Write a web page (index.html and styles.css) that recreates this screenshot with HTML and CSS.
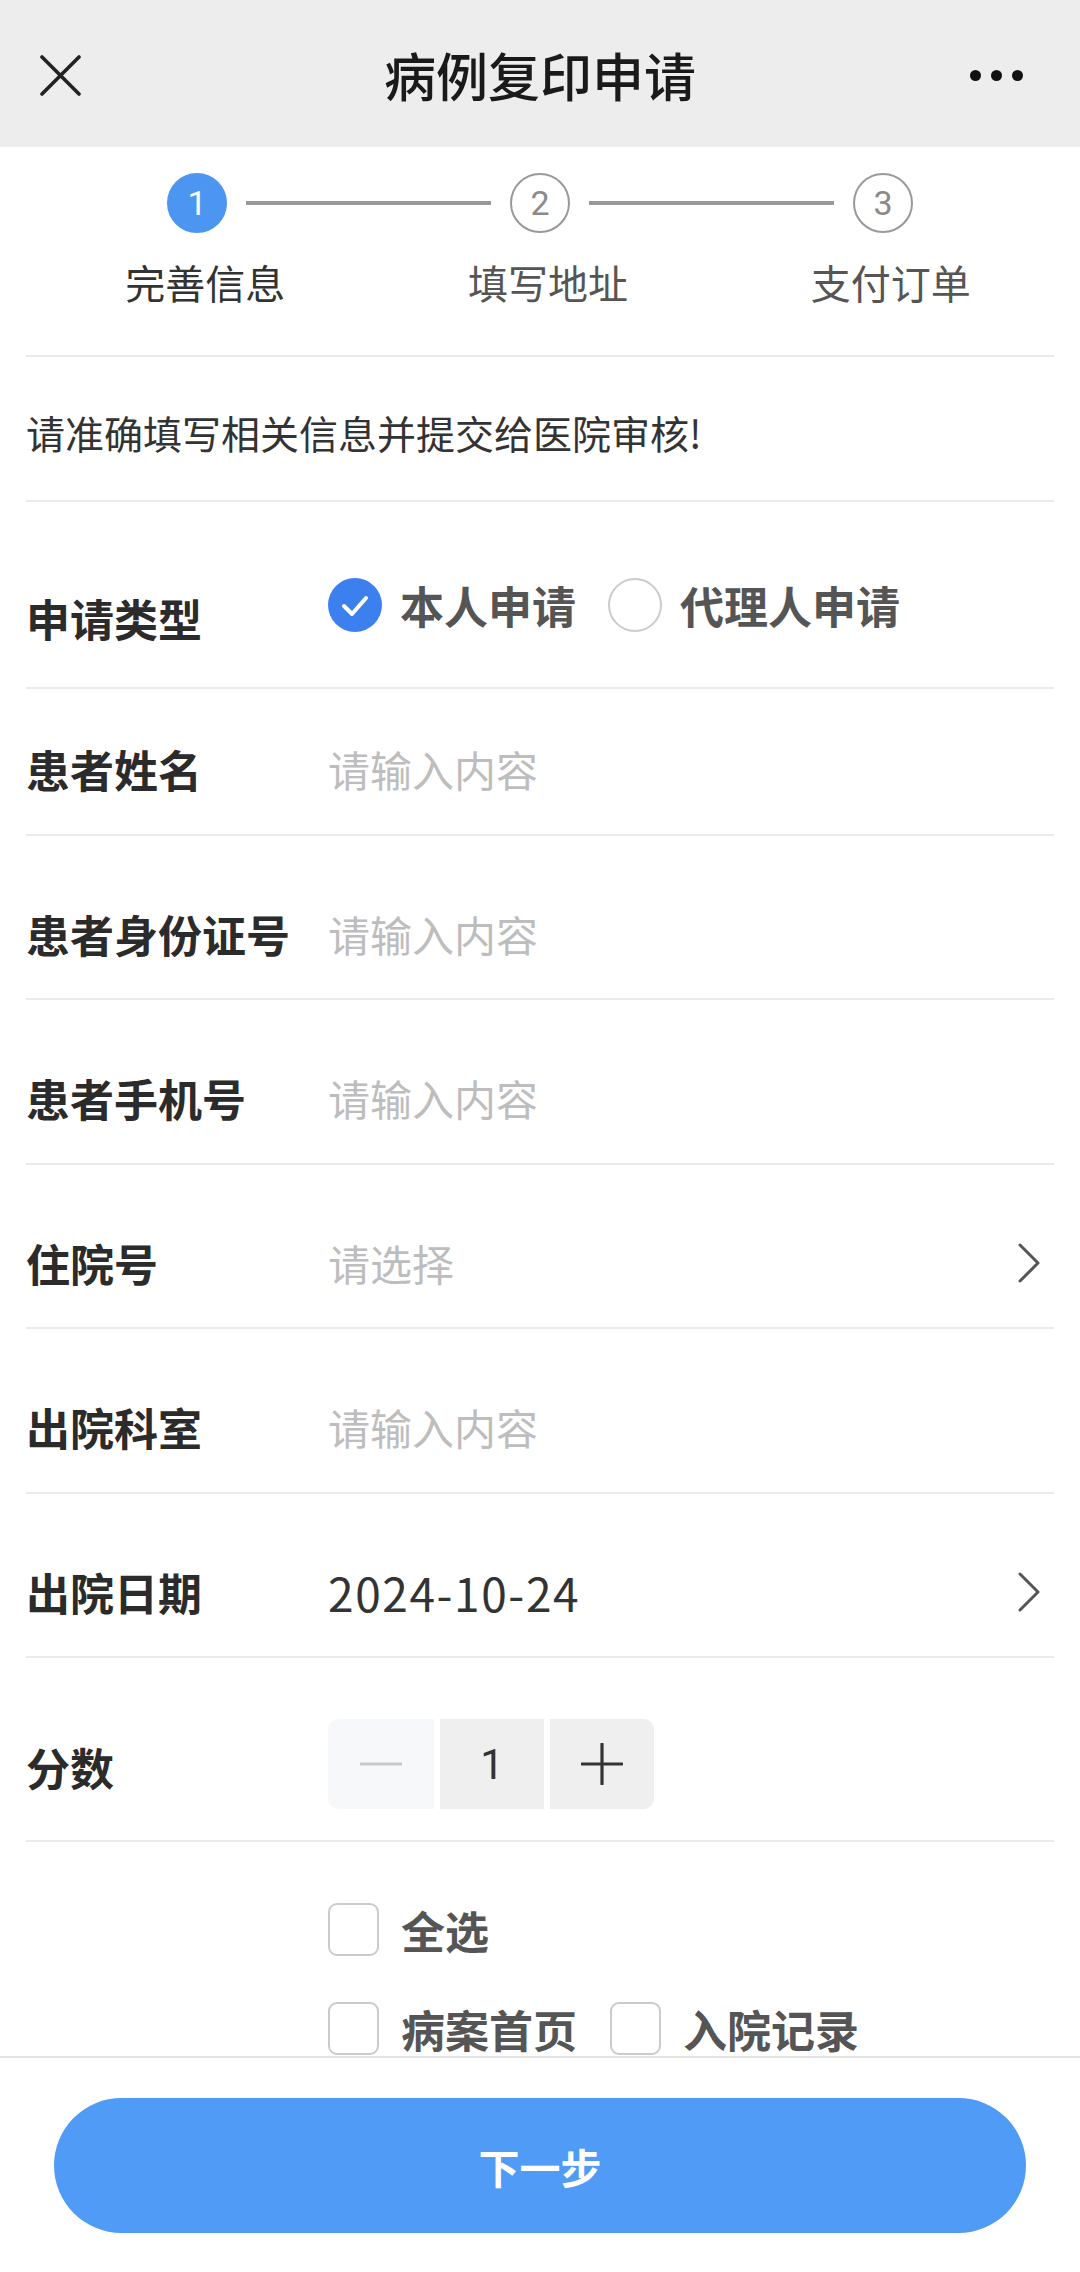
FILE: index.html
```html
<!DOCTYPE html>
<html lang="zh-CN">
  <head>
    <meta charset="UTF-8" />
    <meta name="viewport" content="width=device-width, initial-scale=1.0" />
    <title>病例复印申请</title>
    <link rel="stylesheet" href="styles.css">
  </head>
  <body>
    <div class="nav">
      <svg class="nav-close" width="41" height="41" viewBox="0 0 41 41">
        <path d="M2 2L39 39M39 2L2 39" stroke="#222" stroke-width="3.6" stroke-linecap="round" />
      </svg>
      <div class="nav-title">病例复印申请</div>
      <div class="nav-more"><i></i><i></i><i></i></div>
    </div>

    <div class="steps">
      <div class="step-track">
        <span class="step-dot active">1</span>
        <span class="step-line"></span>
        <span class="step-dot">2</span>
        <span class="step-line"></span>
        <span class="step-dot">3</span>
      </div>
      <div class="step-labels">
        <span class="active">完善信息</span>
        <span>填写地址</span>
        <span>支付订单</span>
      </div>
    </div>

    <div class="form">
      <div class="notice">请准确填写相关信息并提交给医院审核!</div>

      <div class="row row-radio">
        <div class="label">申请类型</div>
        <div class="radios">
          <span class="radio checked">
            <svg width="54" height="54" viewBox="0 0 54 54">
              <circle cx="27" cy="27" r="27" fill="#3c80f0" />
              <path d="M16 28L24 36L38 20" fill="none" stroke="#fff" stroke-width="4" stroke-linecap="round" stroke-linejoin="round" />
            </svg>
          </span>
          <span class="radio-text">本人申请</span>
          <span class="radio"></span>
          <span class="radio-text">代理人申请</span>
        </div>
      </div>

      <div class="row row-first">
        <div class="label">患者姓名</div>
        <div class="value placeholder">请输入内容</div>
      </div>
      <div class="row">
        <div class="label">患者身份证号</div>
        <div class="value placeholder">请输入内容</div>
      </div>
      <div class="row">
        <div class="label">患者手机号</div>
        <div class="value placeholder">请输入内容</div>
      </div>
      <div class="row">
        <div class="label">住院号</div>
        <div class="value placeholder">请选择</div>
        <svg class="arrow" width="24" height="40" viewBox="0 0 24 40">
          <path d="M3 2L21 20L3 38" fill="none" stroke="#555" stroke-width="3" stroke-linecap="round" stroke-linejoin="round" />
        </svg>
      </div>
      <div class="row">
        <div class="label">出院科室</div>
        <div class="value placeholder">请输入内容</div>
      </div>
      <div class="row">
        <div class="label">出院日期</div>
        <div class="value date">2024-10-24</div>
        <svg class="arrow" width="24" height="40" viewBox="0 0 24 40">
          <path d="M3 2L21 20L3 38" fill="none" stroke="#555" stroke-width="3" stroke-linecap="round" stroke-linejoin="round" />
        </svg>
      </div>

      <div class="row row-count">
        <div class="label">分数</div>
        <div class="stepper">
          <span class="stepper-btn minus">
            <svg width="42" height="42" viewBox="0 0 42 42">
              <path d="M1 21H41" stroke="#c8c8c8" stroke-width="3.2" stroke-linecap="round" />
            </svg>
          </span>
          <span class="stepper-num">1</span>
          <span class="stepper-btn">
            <svg width="42" height="42" viewBox="0 0 42 42">
              <path d="M1 21H41M21 1V41" stroke="#333" stroke-width="3.2" stroke-linecap="round" />
            </svg>
          </span>
        </div>
      </div>

      <div class="checks">
        <div class="check-line">
          <span class="checkbox"></span>
          <span class="check-text">全选</span>
        </div>
        <div class="check-line">
          <span class="checkbox"></span>
          <span class="check-text">病案首页</span>
          <span class="checkbox"></span>
          <span class="check-text">入院记录</span>
        </div>
      </div>
    </div>

    <div class="footer">
      <div class="btn-next">下一步</div>
    </div>
  </body>
</html>
```

FILE: styles.css
```css
body {
  margin: 0;
  width: 1080px;
  height: 2272px;
  overflow: hidden;
  background: #fff;
  font-family: "Noto Sans CJK SC", "Noto Sans", sans-serif;
  color: #2b2b2b;
}
.nav {
  height: 147px;
  box-sizing: border-box;
  padding: 3px 40px 0;
  background: #ededed;
  display: grid;
  grid-template-columns: 1fr auto 1fr;
  align-items: center;
}
.nav-close {
  display: block;
}
.nav-title {
  font-size: 52px;
  font-weight: 500;
  color: #1a1a1a;
  line-height: 60px;
}
.nav-more {
  justify-self: end;
  display: flex;
  gap: 10px;
  margin-right: 17px;
}
.nav-more i {
  width: 11px;
  height: 11px;
  border-radius: 50%;
  background: #111;
}
.steps {
  margin: 0 26px;
  padding: 26px 0 48px;
  border-bottom: 2px solid #ebebeb;
}
.step-track {
  display: flex;
  align-items: center;
  justify-content: center;
  margin-left: -26px;
  margin-right: -26px;
}
.step-dot {
  width: 56px;
  height: 56px;
  border: 2px solid #999;
  border-radius: 50%;
  display: flex;
  align-items: center;
  justify-content: center;
  font-family: Roboto, sans-serif;
  font-size: 34px;
  color: #8a8a8a;
}
.step-dot.active {
  background: #4c96f2;
  border-color: #4c96f2;
  color: #fff;
}
.step-line {
  width: 245px;
  height: 4px;
  margin: 0 19px;
  background: #999;
}
.step-labels {
  display: grid;
  grid-template-columns: repeat(3, 1fr);
  margin: 24px -8px 0 8px;
  text-align: center;
  font-size: 40px;
  line-height: 50px;
  color: #555;
}
.step-labels .active {
  color: #333;
}
.form {
  margin: 0 26px;
}
.notice {
  padding: 50px 0 43px;
  line-height: 50px;
  font-size: 39px;
  color: #333;
  border-bottom: 2px solid #ebebeb;
}
.row {
  display: flex;
  align-items: center;
  padding: 74px 0 40.5px;
  border-bottom: 2px solid #ebebeb;
}
.row-first {
  padding-top: 56px;
}
.label {
  width: 302px;
  flex-shrink: 0;
  font-size: 44px;
  line-height: 48px;
  font-weight: 700;
  color: #2b2b2b;
}
.value {
  flex: 1;
  font-size: 42px;
  line-height: 48px;
}
.placeholder {
  color: #bdbdbd;
}
.date {
  font-size: 46px;
  letter-spacing: 1.6px;
  color: #333;
}
.arrow {
  display: block;
  margin-right: 13px;
}
.row-radio {
  align-items: flex-start;
  padding: 76px 0 45px;
}
.row-radio .label {
  margin-top: 16px;
}
.radios {
  display: flex;
  align-items: center;
}
.radio {
  width: 50px;
  height: 50px;
  border: 2px solid #cbcbcb;
  border-radius: 50%;
}
.radio.checked {
  border: none;
  width: 54px;
  height: 54px;
}
.radio svg {
  display: block;
}
.radio-text {
  margin: 0 32px 0 18px;
  font-size: 44px;
  line-height: 54px;
  font-weight: 700;
  color: #555;
}
.row-count {
  padding: 61px 0 31px;
}
.row-count .label {
  margin-top: 6px;
}
.stepper {
  display: flex;
  gap: 6px;
  height: 90px;
  border-radius: 10px;
  overflow: hidden;
}
.stepper-btn,
.stepper-num {
  width: 104px;
  display: flex;
  align-items: center;
  justify-content: center;
  background: #efefef;
}
.stepper-btn svg {
  display: block;
}
.stepper-btn.minus {
  width: 106px;
  background: #f7f8fa;
}
.stepper-num {
  font-family: Roboto, sans-serif;
  font-size: 42px;
  color: #333;
}
.checks {
  padding: 61px 0 0 302px;
  display: flex;
  flex-direction: column;
  gap: 46px;
}
.check-line {
  display: flex;
  align-items: center;
  height: 53px;
}
.checkbox {
  width: 47px;
  height: 49px;
  border: 2px solid #cbcbcb;
  border-radius: 9px;
}
.check-text {
  margin: 0 33px 0 22px;
  font-size: 44px;
  font-weight: 700;
  color: #555;
}
.footer {
  position: fixed;
  left: 0;
  right: 0;
  bottom: 0;
  height: 214px;
  border-top: 2px solid #e2e2e2;
  background: #fff;
}
.btn-next {
  margin: 40px 54px 0;
  height: 135px;
  border-radius: 68px;
  background: #4f9bf5;
  color: #fff;
  font-size: 41px;
  font-weight: 700;
  display: flex;
  align-items: center;
  justify-content: center;
}
```
